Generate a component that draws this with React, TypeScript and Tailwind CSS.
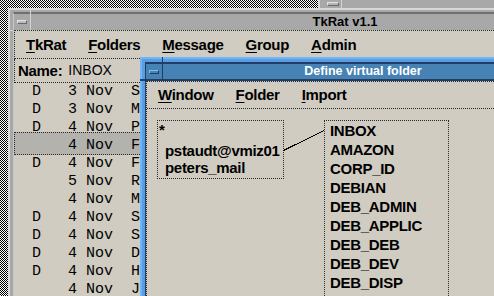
import React from "react";

const rows: { t: string; hl?: boolean }[] = [
  { t: "D   3 Nov  S" },
  { t: "D   3 Nov  M" },
  { t: "D   4 Nov  P" },
  { t: "    4 Nov  F", hl: true },
  { t: "D   4 Nov  F" },
  { t: "    5 Nov  R" },
  { t: "    4 Nov  M" },
  { t: "D   4 Nov  S" },
  { t: "D   4 Nov  S" },
  { t: "D   4 Nov  D" },
  { t: "D   4 Nov  H" },
  { t: "    4 Nov  J" },
];

const folders = [
  "INBOX",
  "AMAZON",
  "CORP_ID",
  "DEBIAN",
  "DEB_ADMIN",
  "DEB_APPLIC",
  "DEB_DEB",
  "DEB_DEV",
  "DEB_DISP",
  "DEB_DOC",
];

function MenuItem({ first, rest, lh }: { first: string; rest: string; lh: string }) {
  return (
    <span className={"px-[11px] whitespace-pre " + lh}>
      <span className="underline decoration-1 underline-offset-[2px]">{first}</span>
      {rest}
    </span>
  );
}

export default function App() {
  return (
    <div className="relative w-[494px] h-[296px] overflow-hidden bg-[image:linear-gradient(90deg,#fff_50%,#000_50%),linear-gradient(#fff_50%,#000_50%)] bg-[length:2px_2px] bg-blend-difference font-['Liberation_Sans',Arial,Helvetica,sans-serif] text-black">
      {/* window behind, top right */}
      <div className="absolute left-[318px] top-0 w-[200px] h-[8px] bg-[#a8a8a8] border-l-2 border-[#d8d8d8] flex">
        <div className="ml-[5px] w-[17px] h-full border-r border-[#d4d4d4] flex items-center justify-center">
          <div className="w-[12px] h-[4px] bg-[#b4b4b4] border border-t-[#e4e4e4] border-l-[#e4e4e4] border-b-[#6a6a6a] border-r-[#6a6a6a]" />
        </div>
      </div>

      {/* main TkRat window */}
      <div className="absolute left-[8px] top-[8px] w-[680px] h-[300px] bg-[#a8a8a8] border-t-2 border-l-2 border-[#d8d8d8] pt-[2px] pl-[3px]">
        <div className="absolute left-[20px] top-[-2px] w-px h-[6px] bg-[#d4d4d4]" />
        <div className="absolute left-[-2px] top-[20px] w-[5px] h-px bg-[#d4d4d4]" />
        <div className="h-full flex flex-col border-t-2 border-t-[#6f6f6f] border-l border-l-[#c6c6c6]">
          <div className="flex h-[16px] shrink-0">
            <div className="w-[17px] h-full border-r border-[#d0d0d0] flex items-center justify-center">
              <div className="w-[10px] h-[4px] bg-[#bdbdbd] border border-t-[#e4e4e4] border-l-[#e4e4e4] border-b-[#6a6a6a] border-r-[#6a6a6a]" />
            </div>
            <div className="flex-1 text-center text-[13px] font-bold leading-[16px]">TkRat v1.1</div>
            <div className="w-[29px]" />
          </div>
          <div className="flex-1 flex flex-col bg-[#d0ccc1]">
            <div className="flex h-[29px] shrink-0 border-y border-l border-dotted border-[#2a2a2a] text-[15px] font-bold tracking-[-0.3px]">
              <MenuItem first="T" rest="kRat" lh="leading-[27px]" />
              <MenuItem first="F" rest="olders" lh="leading-[27px]" />
              <MenuItem first="M" rest="essage" lh="leading-[27px]" />
              <MenuItem first="G" rest="roup" lh="leading-[27px]" />
              <MenuItem first="A" rest="dmin" lh="leading-[27px]" />
            </div>
            <div className="flex items-start h-[24px] shrink-0 border-b border-l border-dotted border-[#2a2a2a] pl-[3px]">
              <span className="text-[15px] font-bold tracking-[-0.3px] leading-[23px]">Name:</span>
              <span className="ml-[6px] text-[14px] leading-[23px]">INBOX</span>
            </div>
            <div className="flex flex-col font-['Liberation_Mono','Courier_New',monospace] text-[15px]">
              {rows.map((r, i) =>
                r.hl ? (
                  <div
                    key={i}
                    className="-mt-[5px] h-[23px] pt-[4px] pl-[17px] bg-[#b3b2ad] border-y border-l border-dotted border-[#2a2a2a] whitespace-pre leading-[17px]"
                  >
                    {r.t}
                  </div>
                ) : (
                  <div key={i} className="h-[18px] pl-[18px] whitespace-pre leading-[18px]">
                    {r.t}
                  </div>
                )
              )}
            </div>
          </div>
        </div>
      </div>

      {/* Define virtual folder dialog */}
      <div className="absolute left-[140px] top-[57px] w-[450px] h-[260px] bg-[#5b9de2] border-t-2 border-l-2 border-[#6fb5f8] pt-[3px] pl-[3px]">
        <div className="absolute left-[20px] top-[-2px] w-px h-[5px] bg-[#1f3d66]" />
        <div className="absolute left-[-2px] top-[20px] w-[5px] h-[2px] bg-[#1f3d66]" />
        <div className="h-full flex flex-col border-t-2 border-l border-[#1f3d66]">
          <div className="flex h-[17px] shrink-0 border-b-2 border-[#1f3d66] bg-[#4682b4]">
            <div className="w-[17px] h-full border-r border-[#1f3d66] flex items-center justify-center">
              <div className="w-[10px] h-[4px] bg-[#4682b4] border border-t-[#7dbdf7] border-l-[#7dbdf7] border-b-[#1f3d66] border-r-[#1f3d66]" />
            </div>
            <div className="flex-1 text-center text-white text-[12.5px] font-bold leading-[15px]">Define virtual folder</div>
            <div className="w-[27px]" />
          </div>
          <div className="flex-1 flex flex-col bg-[#d0ccc1] border-t border-l border-dotted border-[#2a2a2a]">
            <div className="flex h-[27px] shrink-0 border-b border-dotted border-[#2a2a2a] text-[15px] font-bold tracking-[-0.3px]">
              <MenuItem first="W" rest="indow" lh="leading-[26px]" />
              <MenuItem first="F" rest="older" lh="leading-[26px]" />
              <MenuItem first="I" rest="mport" lh="leading-[26px]" />
            </div>
            <div className="relative flex-1 flex items-start gap-[40px] pl-[10px] pt-[11px] text-[15px] font-bold tracking-[-0.3px]">
              <div className="w-[127px] border border-dotted border-[#2a2a2a] pl-[1px] pb-[2px]">
                <div className="h-[17px] leading-[17px]">*</div>
                <div className="mt-[4px] pl-[6px] h-[17px] leading-[17px] whitespace-nowrap">pstaudt@vmiz01</div>
                <div className="pl-[6px] h-[17px] leading-[17px] whitespace-nowrap">peters_mail</div>
              </div>
              <div className="w-[125px] h-[220px] border-t border-x border-dotted border-[#2a2a2a] pl-[5px]">
                {folders.map((f) => (
                  <div key={f} className="h-[19px] leading-[19px] whitespace-nowrap">
                    {f}
                  </div>
                ))}
              </div>
              <svg className="absolute left-0 top-0 w-[300px] h-[100px] pointer-events-none" viewBox="0 0 300 100">
                <line x1="136.5" y1="41.5" x2="177" y2="21.5" stroke="#000" strokeWidth="1" shapeRendering="crispEdges" />
              </svg>
            </div>
          </div>
        </div>
      </div>
    </div>
  );
}
